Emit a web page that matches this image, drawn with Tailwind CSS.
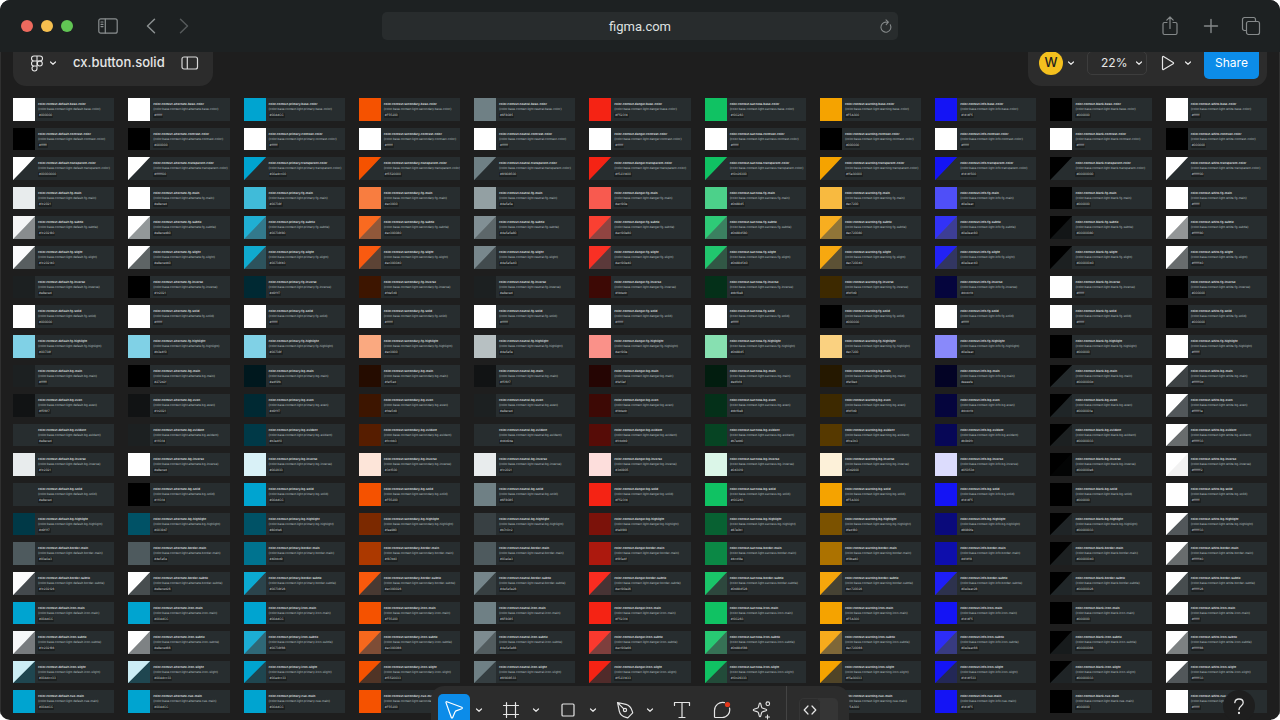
<!DOCTYPE html>
<html lang="en">
<head>
    <meta charset="UTF-8">
    <meta name="viewport" content="width=device-width, initial-scale=1.0">
    <title>cx.button.solid</title>
    <script src="https://cdn.jsdelivr.net/npm/@tailwindcss/browser@4"></script>
</head>
<body class="bg-white font-['Inter',sans-serif] text-[#e6e6e6]">
    <div class="relative flex flex-col h-screen overflow-hidden rounded-[10px] bg-[#1e1e1e]">
        <!-- Browser bar -->
        <header class="relative z-20 grid grid-cols-[1fr_516px_1fr] items-center h-[52px] shrink-0 bg-[#1d2122] px-[19px]">
            <div class="flex items-center pl-0.5">
                <div class="flex gap-2">
                    <span class="size-3 rounded-full bg-[#ed6a5e]"></span>
                    <span class="size-3 rounded-full bg-[#f5bf4f]"></span>
                    <span class="size-3 rounded-full bg-[#61c554]"></span>
                </div>
                <button aria-label="Sidebar" class="ml-[25px]">
                    <svg class="w-5 h-4" viewBox="0 0 20 16" fill="none" stroke="#8a8f90" stroke-width="1.2" stroke-linecap="round"><rect x=".8" y=".8" width="18.4" height="14.4" rx="2"/><path d="M7.3 1v14M3 4h2M3 6.300h2M3 8.600h2"/></svg>
                </button>
                <button aria-label="Back" class="ml-7">
                    <svg class="w-[10px] h-4" viewBox="0 0 10 16" fill="none" stroke="#8a8f90" stroke-width="1.500" stroke-linecap="round" stroke-linejoin="round"><path d="M8.500 1.200 1.500 8l7 6.800"/></svg>
                </button>
                <button aria-label="Forward" class="ml-[23px]">
                    <svg class="w-[10px] h-4" viewBox="0 0 10 16" fill="none" stroke="#55595a" stroke-width="1.500" stroke-linecap="round" stroke-linejoin="round"><path d="M1.500 1.200 8.500 8l-7 6.800"/></svg>
                </button>
            </div>
            <div class="relative flex items-center">
                <input aria-label="Address" value="figma.com" class="w-full h-7 rounded-[5px] bg-[#282c2d] text-center font-['Roboto',sans-serif] text-[13px] text-[#dfe1e1]">
                <button aria-label="Reload" class="absolute right-1">
                    <svg class="size-4" viewBox="0 0 16 16" fill="none" stroke="#85898a" stroke-width="1.100" stroke-linecap="round" stroke-linejoin="round"><path d="M12.300 6.800A5 5 0 1 1 8.500 4.200h1.700M8 1.800l2.400 2.400-2.200 2.400"/></svg>
                </button>
            </div>
            <div class="flex items-center justify-end gap-[17px] text-[#85898a]">
                <button aria-label="Share page">
                    <svg class="w-4 h-5" viewBox="0 0 16 20" fill="none" stroke="currentColor" stroke-width="1.200" stroke-linecap="round" stroke-linejoin="round"><path d="M5 6.500H2.500a1.500 1.500 0 0 0-1.500 1.500v9A1.500 1.500 0 0 0 2.500 18.500h11a1.500 1.500 0 0 0 1.500-1.500V8a1.500 1.500 0 0 0-1.500-1.500H11M8 12.500V1.200M4.800 4.200 8 1l3.200 3.200"/></svg>
                </button>
                <button aria-label="New tab" class="ml-2">
                    <svg class="size-4" viewBox="0 0 16 16" fill="none" stroke="currentColor" stroke-width="1.400" stroke-linecap="round"><path d="M8 1.500v13M1.500 8h13"/></svg>
                </button>
                <button aria-label="Tabs" class="ml-[5px]">
                    <svg class="size-5" viewBox="0 0 20 20" fill="none" stroke="currentColor" stroke-width="1.200" stroke-linejoin="round"><path d="M5.500 14.500H3.500a2 2 0 0 1-2-2v-9a2 2 0 0 1 2-2h9a2 2 0 0 1 2 2v2"/><rect x="5.500" y="5.500" width="13" height="13" rx="2"/></svg>
                </button>
            </div>
        </header>

        <!-- Canvas -->
        <main class="relative flex-1 border-x border-[#303030] px-3 pt-[46px]">
            <div id="tokens" class="grid grid-cols-11 grid-rows-[repeat(21,1fr)] gap-x-[14px] gap-y-[7px] h-[615px]"></div>
        </main>

        <!-- File panel -->
        <nav class="absolute z-10 left-[13px] top-9 flex items-center h-[50px] rounded-[13px] bg-[#2c2c2c] pl-[17px] pr-[14px] pt-1">
            <button aria-label="Main menu" class="flex items-center gap-[5px]">
                <svg class="w-[14px] h-[17px]" viewBox="0 0 14 17" fill="none" stroke="#e6e6e6" stroke-width="1.100"><path d="M7 1H4a2.500 2.500 0 0 0 0 5h3zM7 6H4a2.500 2.500 0 0 0 0 5h3zM7 11H4a2.500 2.500 0 1 0 3 2.500zM7 1h3a2.500 2.500 0 0 1 0 5H7z"/><circle cx="9.800" cy="8.500" r="2.500"/></svg>
                <svg class="size-2" viewBox="0 0 8 8" fill="none" stroke="#e6e6e6" stroke-width="1.200" stroke-linecap="round" stroke-linejoin="round"><path d="m1.500 3 2.500 2.300L6.500 3"/></svg>
            </button>
            <h1 class="ml-4 text-[13px] font-medium">cx.button.solid</h1>
            <button aria-label="Toggle sidebar" class="ml-4">
                <svg class="w-[18px] h-[14px]" viewBox="0 0 18 14" fill="none" stroke="#d8d8d8" stroke-width="1.200"><rect x="1" y="1" width="15.500" height="12" rx="2"/><path d="M6.300 1v12"/></svg>
            </button>
        </nav>

        <!-- Share panel -->
        <div class="absolute z-10 right-[13px] top-9 flex items-center h-[50px] rounded-[13px] bg-[#2c2c2c] pl-[11px] pr-2 pt-1">
            <button aria-label="Account" class="flex items-center gap-1">
                <span class="flex items-center justify-center size-6 rounded-full bg-[#f4c01e] text-[13px] font-medium text-[#1e1e1e]">W</span>
                <svg class="size-2" viewBox="0 0 8 8" fill="none" stroke="#e6e6e6" stroke-width="1.200" stroke-linecap="round" stroke-linejoin="round"><path d="m1.500 3 2.500 2.300L6.500 3"/></svg>
            </button>
            <button class="ml-3 flex items-center justify-between w-[60px] h-6 rounded-[5px] border border-[#3d3d3d] pl-[13px] pr-[3px] text-xs">22%
                <svg class="size-2" viewBox="0 0 8 8" fill="none" stroke="#e6e6e6" stroke-width="1.200" stroke-linecap="round" stroke-linejoin="round"><path d="m1.500 3 2.500 2.300L6.500 3"/></svg>
            </button>
            <button aria-label="Present" class="ml-[14px] flex items-center gap-[9px]">
                <svg class="w-[14px] h-4" viewBox="0 0 14 16" fill="none" stroke="#e6e6e6" stroke-width="1.200" stroke-linejoin="round"><path d="M1.500 2.200v11.600c0 .6.500.9 1 .6l9.700-5.700c.5-.3.500-.9 0-1.200L2.500 1.600c-.5-.3-1 0-1 .6z"/></svg>
                <svg class="size-2" viewBox="0 0 8 8" fill="none" stroke="#e6e6e6" stroke-width="1.200" stroke-linecap="round" stroke-linejoin="round"><path d="m1.500 3 2.500 2.300L6.500 3"/></svg>
            </button>
            <button class="ml-3 w-[55px] h-8 rounded-[5px] bg-[#0c8ce9] text-xs text-white">Share</button>
        </div>

        <!-- Tool bar -->
        <div class="absolute z-10 left-1/2 -translate-x-1/2 top-[686px] flex w-[418px] h-12 rounded-t-[13px] bg-[#2c2c2c] pl-[7px] pt-2 text-[#e6e6e6]">
            <button aria-label="Move" class="flex items-center justify-center w-8 h-8 rounded-[5px] bg-[#0c8ce9] text-white">
                <svg class="size-5" viewBox="0 0 20 20" fill="none" stroke="currentColor" stroke-width="1.200" stroke-linejoin="round"><path d="M2 2.600c-.2-.6.300-1.100.9-.9l14.900 5.500c.7.300.7 1.200 0 1.500l-5.800 2.200a1.500 1.500 0 0 0-.9.900l-2.400 5.700c-.3.700-1.200.6-1.400 0z"/></svg>
            </button>
            <button aria-label="Move options" class="ml-[5px] h-8"><svg class="size-2" viewBox="0 0 8 8" fill="none" stroke="currentColor" stroke-width="1.200" stroke-linecap="round" stroke-linejoin="round"><path d="m1.500 3 2.500 2.300L6.500 3"/></svg></button>
            <button aria-label="Frame" class="ml-[19px] h-8"><svg class="size-[18px]" viewBox="0 0 18 18" fill="none" stroke="currentColor" stroke-width="1.200" stroke-linecap="round"><path d="M4.500 1.500v15M13.500 1.500v15M1.500 4.500h15M1.500 13.500h15"/></svg></button>
            <button aria-label="Frame options" class="ml-3 h-8"><svg class="size-2" viewBox="0 0 8 8" fill="none" stroke="currentColor" stroke-width="1.200" stroke-linecap="round" stroke-linejoin="round"><path d="m1.500 3 2.500 2.300L6.500 3"/></svg></button>
            <button aria-label="Rectangle" class="ml-[19px] h-8"><svg class="size-[18px]" viewBox="0 0 18 18" fill="none" stroke="currentColor" stroke-width="1.200"><rect x="3" y="3" width="12" height="12" rx="1"/></svg></button>
            <button aria-label="Shape options" class="ml-3 h-8"><svg class="size-2" viewBox="0 0 8 8" fill="none" stroke="currentColor" stroke-width="1.200" stroke-linecap="round" stroke-linejoin="round"><path d="m1.500 3 2.500 2.300L6.500 3"/></svg></button>
            <button aria-label="Pen" class="ml-[19px] h-8"><svg class="size-[18px]" viewBox="0 0 18 18" fill="none" stroke="currentColor" stroke-width="1.200" stroke-linejoin="round"><path d="M1.500 1.500 3.300 10.200c.7 3.300 3.400 5.500 6.700 6.200l1.800.4 4.900-4.900-.5-1.700C15.300 6.900 13.200 4.200 10 3.400zM1.800 1.800l6 6"/><circle cx="9" cy="9" r="1.600"/></svg></button>
            <button aria-label="Pen options" class="ml-3 h-8"><svg class="size-2" viewBox="0 0 8 8" fill="none" stroke="currentColor" stroke-width="1.200" stroke-linecap="round" stroke-linejoin="round"><path d="m1.500 3 2.500 2.300L6.500 3"/></svg></button>
            <button aria-label="Text" class="ml-[19px] h-8"><svg class="size-[18px]" viewBox="0 0 18 18" fill="none" stroke="currentColor" stroke-width="1.200" stroke-linecap="round" stroke-linejoin="round"><path d="M1.500 4.500v-3h15v3M9 1.500v15M6 16.500h6"/></svg></button>
            <button aria-label="Comment" class="ml-[22px] h-8"><svg class="size-[18px]" viewBox="0 0 18 18" fill="none" stroke="currentColor" stroke-width="1.200" stroke-linecap="round" stroke-linejoin="round"><path d="M11.500 1.700A8 8 0 0 0 1.500 9.500v6.200c0 .5.300.8.800.8H9a7.600 7.600 0 0 0 7.500-9.500"/><circle cx="14.500" cy="3.500" r="2.600" fill="#e5391c" stroke="none"/></svg></button>
            <button aria-label="Actions" class="ml-[21px] h-8"><svg class="size-[19px]" viewBox="0 0 19 19" fill="none" stroke="currentColor" stroke-width="1.100" stroke-linecap="round" stroke-linejoin="round"><path d="M8 2c.4 0 .6.300.7.700l.8 3.200c.2.800.6 1.200 1.400 1.400l3.200.9c.8.200.8 1.300 0 1.500l-3.200.9c-.8.200-1.200.6-1.400 1.400l-.8 3.200c-.2.800-1.200.8-1.400 0L6.500 12c-.2-.8-.7-1.200-1.500-1.400l-3.100-.9c-.8-.2-.8-1.300 0-1.500L5 7.300c.8-.2 1.300-.6 1.500-1.400l.8-3.200C7.400 2.300 7.600 2 8 2z"/><circle cx="15.800" cy="2.700" r="1.800"/><path d="M15.500 14v4M13.500 16h4"/></svg></button>
            <div class="ml-[15px] -mt-2 w-px bg-[#444444]"></div>
            <button aria-label="Dev mode" class="ml-3 mt-1 flex w-[39px] h-8 rounded-[5px] bg-[#353535]">
                <span class="flex justify-center w-[22px] h-8 rounded-[5px] border border-[#353535] bg-[#2c2c2c] pt-1"><svg class="size-[14px]" viewBox="0 0 14 14" fill="none" stroke="currentColor" stroke-width="1.200" stroke-linecap="round" stroke-linejoin="round"><path d="M5 3 1.200 7 5 11M9 3l3.800 4L9 11"/></svg></span>
            </button>
        </div>

        <!-- Help -->
        <button aria-label="Help" class="absolute z-10 right-[25px] top-[690px] flex justify-center size-8 rounded-full bg-[#1e1e1e] pt-2">
            <svg class="w-3 h-[17px]" viewBox="0 0 12 17" fill="none" stroke="#e6e6e6" stroke-width="1.300" stroke-linecap="round" stroke-linejoin="round"><path d="M1.800 4.600A4.200 4.200 0 0 1 6 1c2.400 0 4.200 1.600 4.200 3.800C10.200 8 6 8 6 11.500"/><circle cx="6" cy="15" r=".5" fill="#e6e6e6"/></svg>
        </button>
    </div>

    <script>
        const rows = [
            'base-color', 'contrast-color', 'transparent-color',
            'fg-main', 'fg-subtle', 'fg-slight', 'fg-inverse', 'fg-solid', 'fg-highlight',
            'bg-main', 'bg-even', 'bg-evident', 'bg-inverse', 'bg-solid', 'bg-highlight',
            'border-main', 'border-subtle', 'icon-main', 'icon-subtle', 'icon-slight', 'cue-main'
        ];

        // One entry per row: printed value, swatch colour, colour of the lower half when translucent
        const contexts = {
            default: `#000000 #fff|#ffffff #000|#00000000 #fff #272d2f|#1c2021 #e8eced|#1c202180 #f4f5f6 #888c8e|#1c202140 #fafbfc #585e60|#e8eced #1c2021|#000000 #fff|#00738f #80d1e6|#ffffff #1c2021|#f5f6f7 #111314|#e8eced #272d2f|#1c2021 #e8eced|#e8eced #272d2f|#d9f1f7 #003947|#93a0a3 #4e5a5e|#1c202126 #fcfcfc #44494d|#00A4CC #00a4d0|#1c202166 #f6f7f8 #787b7e|#00A4cc33 #ccedf5 #1f4650|#00A4CC #00a4d0`,
            alternate: `#ffffff #fff|#000000 #000|#ffffff00 #fff #272d2f|#e8eced #fff|#e8eced80 #fff #939899|#e8eced40 #fff #5e6465|#1c2021 #000|#ffffff #fff|#b3e4f0 #80d1e6|#272d2f #000|#1c2021 #111314|#111314 #1c2021|#e8eced #fff|#111314 #000|#003947 #005266|#4e5a5e #4e5a5e|#e8eced26 #fff #474d4f|#00A4CC #00a4d0|#e8eced66 #fff #7e8284|#00A4cc33 #ccedf5 #1f4650|#00A4CC #00a4d0`,
            primary: `#00A4CC #00a4d0|#ffffff #fff|#00a4cc00 #00a4d0 #272d2f|#00738f #40bbd9|#00738f80 #20afd3 #33798c|#00738f40 #10aacf #2d535d|#d9f1f7 #002933|#ffffff #fff|#00738f #80d1e6|#edf9fb #00181e|#d9f1f7 #002933|#b3e4f0 #003947|#002933 #d9f1f7|#00A4CC #00a4d0|#80d1e6 #005266|#40bbd9 #00738f|#00738f26 #0baad2 #2b444c|#00A4CC #00a4d0|#00738f66 #1cadd4 #2f6877|#00a4cc33 #00a4d0 #1f4650|#00A4CC #00a4d0`,
            secondary: `#F55200 #f55200|#ffffff #fff|#f5520000 #f55200 #272d2f|#ac3900 #f87d40|#ac390080 #f96a20 #90583a|#ac390040 #f95a10 #5c4335|#fde5d9 #3d1500|#ffffff #fff|#ac3900 #faa980|#fef5ed #250c00|#fde5d9 #3d1500|#fccbb3 #561d00|#3d1500 #fde5d9|#F55200 #f55200|#faa980 #7b2900|#f87d40 #ac3900|#ac390026 #f9590c #483932|#F55200 #f55200|#ac390066 #f6681d #7e4d36|#f5520033 #f55200 #503426|#F55200 #f55200`,
            neutral: `#6F8085 #6f8085|#ffffff #fff|#6f808500 #6f8085 #272d2f|#4e5a5e #93a0a3|#4e5a5e80 #818f94 #5d676a|#4e5a5e40 #78878c #424b4e|#e8eced #1c2021|#ffffff #fff|#4e5a5e #b7c0c2|#f5f6f7 #111314|#e8eced #1c2021|#d4d9da #272d2f|#1c2021 #e8eced|#6F8085 #6f8085|#b7c0c2 #384043|#93a0a3 #4e5a5e|#4e5a5e26 #75858a #373f41|#6F8085 #6f8085|#4e5a5e66 #7d8b90 #525c5f|#6f808533 #6f8085 #353e41|#6F8085 #6f8085`,
            danger: `#F52314 #f52314|#ffffff #fff|#f5231400 #f52314 #272d2f|#ac190e #f85a4f|#ac190e80 #fa4032 #904441|#ac190e40 #f93024 #5b393a|#fddedc #3d0905|#ffffff #fff|#ac190e #fa9189|#fef0ef #250503|#fddedc #3d0905|#fcbdb9 #560c07|#3d0905 #fddedc|#F52314 #f52314|#fa9189 #7b120a|#f85a4f #ac190e|#ac190e26 #fa2c20 #473334|#F52314 #f52314|#ac190e66 #fa392e #7e3f3d|#f5231433 #f52314 #502b2a|#F52314 #f52314`,
            success: `#10C263 #10c263|#ffffff #fff|#10c26300 #10c263 #272d2f|#0b8845 #4cd18a|#0b884580 #2eca77 #3b8060|#0b884540 #21c66e #315745|#dbf6e8 #043019|#ffffff #fff|#0b8845 #87e0b1|#edfbf4 #021d0f|#dbf6e8 #043019|#b7edd0 #064423|#043019 #dbf6e8|#10C263 #10c263|#87e0b1 #086132|#4cd18a #0b8845|#0b884526 #1ac569 #2d473d|#10C263 #10c263|#0b884566 #28ca73 #367155|#10c26333 #10c263 #224b39|#10C263 #10c263`,
            warning: `#F5A300 #f5a300|#000000 #000|#f5a30000 #f5a300 #272d2f|#ac7200 #f8ba40|#ac720080 #f8ae20 #907538|#ac720040 #f7a810 #5c5135|#fdf1d9 #3d2900|#000000 #000|#ac7200 #fad180|#fef8ed #251800|#fdf1d9 #3d2900|#fce3b3 #563900|#3d2900 #fdf1d9|#F5A300 #f5a300|#fad180 #7b5200|#f8ba40 #ac7200|#ac720026 #f6a60b #464233|#F5A300 #f5a300|#ac720066 #f7ab1c #7e6738|#f5a30033 #f5a300 #504427|#F5A300 #f5a300`,
            info: `#1414F5 #1414f5|#ffffff #fff|#1414f500 #1414f5 #272d2f|#0e0eac #4f4ff8|#0e0eac80 #3232f7 #3d3e94|#0e0eac40 #2222f6 #323661|#dcdcfd #05053d|#ffffff #fff|#0e0eac #8989fa|#eeeefe #030325|#dcdcfd #05053d|#b9b9fc #070756|#05053d #dcdcfd|#1414F5 #1414f5|#8989fa #0a0a7b|#4f4ff8 #0e0eac|#0e0eac26 #1e1ef7 #2d324d|#1414F5 #1414f5|#0e0eac66 #2d2df7 #383b80|#1414f533 #1414f5 #232856|#1414F5 #1414f5`,
            black: `#000000 #000|#ffffff #fff|#00000000 #000 #272d2f|#000000 #000|#00000080 #000 #131617|#00000040 #000 #1c2021|#ffffff #fff|#ffffff #fff|#000000 #000|#0000000d #000 #23292b|#0000001a #000 #1f2527|#00000033 #000 #1c2021|#000000e6 #000 #030404|#000000 #000|#00000033 #000 #1f2426|#00000040 #000 #1c2021|#00000026 #000 #202628|#000000 #000|#00000066 #000 #171b1c|#00000033 #000 #1f2426|#000000 #000`,
            white: `#ffffff #fff|#000000 #000|#ffffff00 #fff #272d2f|#ffffff #fff|#ffffff80 #fff #939697|#ffffff40 #fff #686c6d|#000000 #000|#000000 #000|#ffffff #fff|#ffffff0d #fff #3d4244|#ffffff1a #fff #52575a|#ffffff33 #fff #686c6d|#fffffff2 #fff #f2f2f2|#ffffff #fff|#ffffff33 #fff #52575a|#ffffff40 #fff #686c6d|#ffffff26 #fff #474d4f|#ffffff #fff|#ffffff66 #fff #7d8182|#ffffff33 #fff #52575a|#ffffff #fff`
        };

        const grid = document.getElementById('tokens');
        const columns = Object.entries(contexts).map(([name, list]) => [name, list.split('|')]);

        rows.forEach((row, i) => {
            columns.forEach(([name, list]) => {
                const [value, color, lower] = list[i].split(' ');
                const fill = lower ? `linear-gradient(to bottom right, ${color} 49%, ${lower} 52%)` : color;
                grid.insertAdjacentHTML('beforeend', `
                    <article class="flex min-w-0 min-h-0 overflow-hidden bg-[#272d2f]">
                        <div class="w-[22px] shrink-0" style="background: ${fill}"></div>
                        <div class="flex flex-col items-start pl-[3px] pt-1 text-[3px] leading-[5px] whitespace-nowrap [text-rendering:geometricPrecision]">
                            <h2 class="font-bold text-[#d4d9da]">color.context.${name}.${row}</h2>
                            <p class="text-[#b7c0c2]">{color.base.context.light.${name}.${row}}</p>
                            <code class="mt-px rounded-[1px] bg-[#1c2021] px-px font-['Inter',sans-serif] text-[#d4d9da]">${value}</code>
                        </div>
                    </article>`);
            });
        });
    </script>
</body>
</html>
